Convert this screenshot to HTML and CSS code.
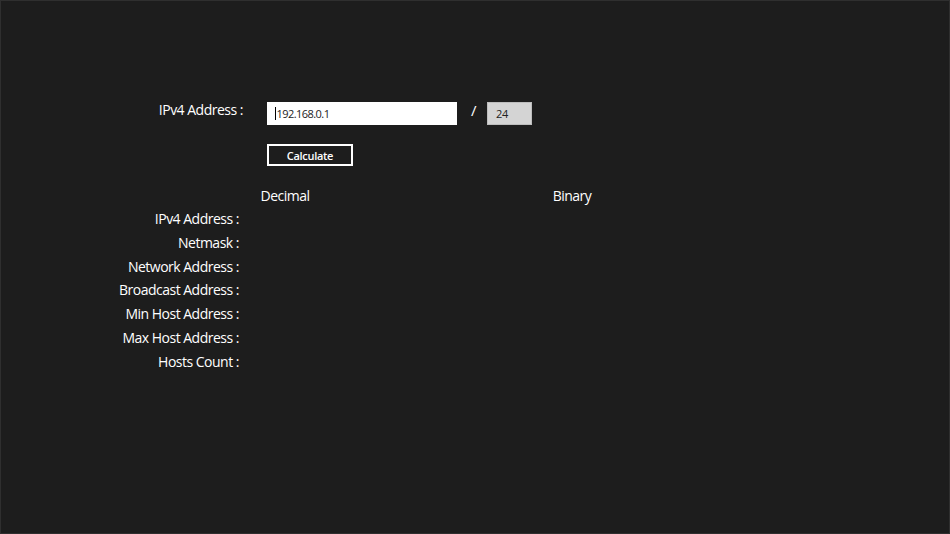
FILE: index.html
```html
<!DOCTYPE html>
<html>
<head>
<meta charset="utf-8">
<link rel="stylesheet" href="styles.css">
</head>
<body>
<div class="page">
  <div class="input-row">
    <label class="top-label">IPv4 Address :</label>
    <div class="ip-field"><span class="caret"></span>192.168.0.1</div>
    <span class="slash">/</span>
    <div class="mask-field">24</div>
  </div>
  <div class="button-row">
    <button class="calc-btn">Calculate</button>
  </div>
  <div class="results">
    <div></div>
    <div class="col-head">Decimal</div>
    <div class="col-head">Binary</div>
    <div class="res-label">IPv4 Address :</div><div></div><div></div>
    <div class="res-label">Netmask :</div><div></div><div></div>
    <div class="res-label">Network Address :</div><div></div><div></div>
    <div class="res-label">Broadcast Address :</div><div></div><div></div>
    <div class="res-label">Min Host Address :</div><div></div><div></div>
    <div class="res-label">Max Host Address :</div><div></div><div></div>
    <div class="res-label">Hosts Count :</div><div></div><div></div>
  </div>
</div>
</body>
</html>
```
FILE: styles.css
```css
html, body {
  margin: 0;
  padding: 0;
  background: #1d1d1d;
}
.page {
  width: 950px;
  height: 534px;
  box-sizing: border-box;
  border: 1px solid #2f2f2f;
  background: #1d1d1d;
  color: #ffffff;
  font-family: "Open Sans", "Noto Sans", sans-serif;
  padding-top: 101px;
}
.input-row {
  display: flex;
  align-items: center;
  height: 23px;
}
.top-label {
  width: 242px;
  text-align: right;
  font-size: 14px;
  letter-spacing: -0.5px;
  margin-top: -8px;
}
.ip-field {
  margin-left: 24px;
  width: 190px;
  height: 23px;
  box-sizing: border-box;
  background: #ffffff;
  color: #222;
  font-size: 11px;
  display: flex;
  align-items: center;
  padding-left: 8px;
  letter-spacing: -0.55px;
}
.caret {
  display: inline-block;
  width: 1px;
  height: 13px;
  background: #000;
  margin-right: 0.5px;
}
.slash {
  margin-left: 14px;
  width: 16px;
  font-size: 15px;
  margin-top: -7px;
}
.mask-field {
  width: 45px;
  height: 23px;
  box-sizing: border-box;
  background: #d4d4d4;
  border: 1px solid #bdbdbd;
  color: #222;
  font-size: 11px;
  letter-spacing: -0.3px;
  display: flex;
  align-items: center;
  padding-left: 8px;
}
.button-row {
  padding-left: 266px;
  margin-top: 19px;
}
.calc-btn {
  display: block;
  width: 86px;
  height: 22px;
  box-sizing: border-box;
  background: #1d1d1d;
  border: 2px solid #ffffff;
  color: #ffffff;
  font-family: "Open Sans", sans-serif;
  font-weight: 600;
  font-size: 11px;
  padding: 0;
  letter-spacing: -0.3px;
}
.results {
  display: grid;
  grid-template-columns: 238px 92px 482px;
  grid-template-rows: 22px repeat(7, 23.83px);
  margin-top: 19px;
  font-size: 14px;
  letter-spacing: -0.5px;
  line-height: 22px;
}
.col-head {
  text-align: center;
}
.res-label {
  text-align: right;
  padding-right: 0;
  align-self: center;
}
```
